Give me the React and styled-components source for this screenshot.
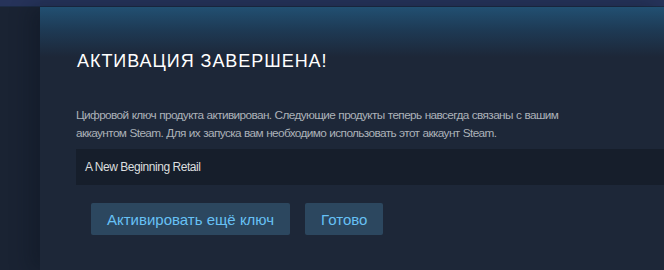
import React from 'react'
import styled, { createGlobalStyle } from 'styled-components'

const GlobalStyle = createGlobalStyle`
  html, body {
    margin: 0;
    padding: 0;
    background: #1a2333;
    overflow: hidden;
  }
  body {
    font-family: 'Liberation Sans', Arial, sans-serif;
  }
`

const Page = styled.div`
  width: 664px;
  height: 270px;
  display: flex;
  flex-direction: column;
  background: #1a2333;
  overflow: hidden;
`

const TopStrip = styled.div`
  height: 6px;
  flex-shrink: 0;
  background: #26335a;
  border-bottom: 1px solid #1c2b45;
`

const Dialog = styled.div`
  flex: 1;
  margin-left: 40px;
  padding: 44px 0 0 36px;
  background: linear-gradient(
      180deg,
      rgba(34, 84, 120, 0.9) 0px,
      rgba(30, 72, 106, 0.55) 24px,
      rgba(29, 39, 56, 0) 50px
    ),
    #1d2738;
  box-shadow: -10px 0 18px rgba(10, 16, 28, 0.35);
`

const Title = styled.h2`
  margin: 0 0 35px 1px;
  font-size: 18px;
  font-weight: normal;
  letter-spacing: 0.95px;
  color: #ffffff;
  line-height: 20px;
`

const Message = styled.p`
  margin: 0 0 7px;
  font-size: 11.8px;
  letter-spacing: -0.62px;
  word-spacing: 0.5px;
  line-height: 18px;
  color: #acb2b8;
  max-width: 485px;
`

const ProductBox = styled.div`
  height: 36px;
  display: flex;
  align-items: center;
  padding-left: 9px;
  background: #161e2b;
  font-size: 12px;
  letter-spacing: -0.45px;
  color: #dcdedf;
`

const ButtonRow = styled.div`
  display: flex;
  gap: 15px;
  padding: 18px 0 0 15px;
`

const Button = styled.button`
  height: 32px;
  padding: 0 16px;
  border: none;
  border-radius: 2px;
  background: #2c475f;
  color: #67c1f5;
  font-family: 'Liberation Sans', Arial, sans-serif;
  font-size: 15px;
  cursor: pointer;
  &:hover {
    background: #3a5c78;
    color: #fff;
  }
`

const App = () => {
  return (
    <>
      <GlobalStyle />
      <Page>
        <TopStrip />
        <Dialog>
          <Title>АКТИВАЦИЯ ЗАВЕРШЕНА!</Title>
          <Message>
            Цифровой ключ продукта активирован. Следующие продукты теперь навсегда связаны с вашим
            аккаунтом Steam. Для их запуска вам необходимо использовать этот аккаунт Steam.
          </Message>
          <ProductBox>A New Beginning Retail</ProductBox>
          <ButtonRow>
            <Button>Активировать ещё ключ</Button>
            <Button>Готово</Button>
          </ButtonRow>
        </Dialog>
      </Page>
    </>
  )
}

export default App
